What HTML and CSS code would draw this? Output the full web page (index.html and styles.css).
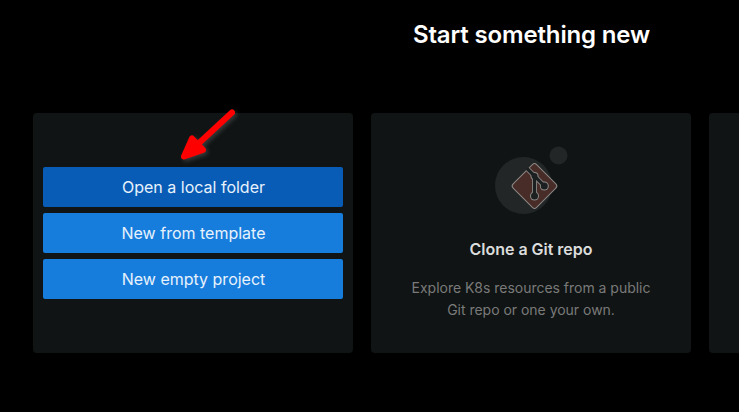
FILE: index.html
```html
<!DOCTYPE html>
<html lang="en">
<head>
<meta charset="utf-8">
<title>Start something new</title>
<link rel="stylesheet" href="styles.css">
</head>
<body>
<main class="start">
  <h1 class="title">Start something new</h1>
  <div class="cards">
    <section class="card actions">
      <button class="btn active">Open a local folder</button>
      <button class="btn">New from template</button>
      <button class="btn">New empty project</button>
      <svg class="arrow" width="70" height="60" viewBox="0 0 70 60">
        <path d="M57 9.500 L23 41" stroke="#f00" stroke-width="6" stroke-linecap="round"/>
        <path d="M17 35.500 L9 53.500 L28 46.800 Z" fill="#f00" stroke="#f00" stroke-width="6" stroke-linejoin="round"/>
      </svg>
    </section>
    <section class="card repo">
      <svg class="git" width="74" height="70" viewBox="0 0 74 70">
        <circle cx="28.500" cy="40.500" r="28.500" fill="#222626"/>
        <circle cx="63.500" cy="10.500" r="9" fill="#222626"/>
        <rect x="22.900" y="24.400" width="33.200" height="33.200" rx="3" transform="rotate(45 39.500 41)" fill="#482c28" stroke="#8b8987"/>
        <g fill="#8b8987" stroke="#8b8987" stroke-width="5">
          <path d="M33 24.500 L39.500 31 L49.300 41 M39.500 31 V51" fill="none"/>
          <g stroke="none">
            <circle cx="39.500" cy="31" r="4"/>
            <circle cx="39.500" cy="51" r="4.500"/>
            <circle cx="49.300" cy="41" r="4.500"/>
          </g>
        </g>
        <g fill="#1c2020" stroke="#1c2020" stroke-width="3.200">
          <path d="M32 23.500 L39.500 31 L49.300 41 M39.500 31 V51" fill="none"/>
          <g stroke="none">
            <circle cx="39.500" cy="31" r="3"/>
            <circle cx="39.500" cy="51" r="3.500"/>
            <circle cx="49.300" cy="41" r="3.500"/>
          </g>
        </g>
      </svg>
      <h2 class="card-title">Clone a Git repo</h2>
      <p class="card-text">Explore K8s resources from a public Git repo or one your own.</p>
    </section>
    <section class="card"></section>
  </div>
</main>
</body>
</html>
```
FILE: styles.css
```css
* { box-sizing: border-box; }
body {
  margin: 0;
  height: 412px;
  overflow: hidden;
  background: #000;
  font-family: Inter, sans-serif;
}
.start {
  width: 996px;
  margin-left: 33px;
  padding-top: 16px;
}
.title {
  margin: 0 0 59px;
  padding-left: 1px;
  color: #fff;
  font-size: 24px;
  line-height: 38px;
  font-weight: 600;
  letter-spacing: -.15px;
  text-align: center;
}
.cards {
  display: flex;
  gap: 18px;
}
.card {
  position: relative;
  width: 320px;
  height: 240px;
  flex: none;
  border-radius: 4px;
  background: #101414;
}
.actions {
  display: flex;
  flex-direction: column;
  justify-content: center;
  gap: 6px;
  padding: 0 10px;
}
.btn {
  height: 40px;
  padding: 0 0 0 1px;
  border: 0;
  border-radius: 2px;
  background: #177ddc;
  color: #e7f2fc;
  font: 400 16px/40px Inter, sans-serif;
}
.btn.active { background: #095cb5; }
.arrow {
  position: absolute;
  left: 142px;
  top: -10px;
  fill: none;
  filter: drop-shadow(2px 2px 2px rgba(90, 90, 90, .55));
}
.repo {
  display: flex;
  flex-direction: column;
  align-items: center;
  padding: 32px 36px 0;
  text-align: center;
}
.git { margin-left: 2px; }
.card-title {
  margin: 22px 0 16px;
  color: #dbdcdc;
  font-size: 16px;
  line-height: 24px;
  font-weight: 600;
  letter-spacing: -.03px;
}
.card-text {
  margin: 0;
  color: #7a7a7a;
  font-size: 14px;
  line-height: 22px;
  letter-spacing: -.02px;
}
```
